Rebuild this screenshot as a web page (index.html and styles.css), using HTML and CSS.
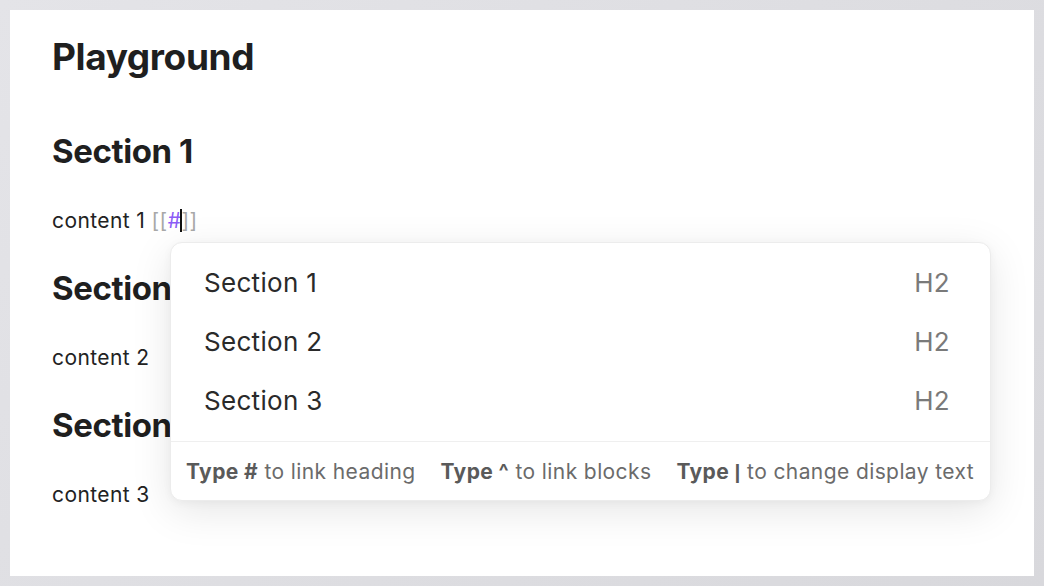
FILE: index.html
```html
<!DOCTYPE html>
<html>
<head>
<meta charset="utf-8">
<link rel="stylesheet" href="styles.css">
</head>
<body>
<div class="panel">
  <h1 class="title">Playground</h1>
  <section class="sec">
    <h2 class="heading">Section 1</h2>
    <p class="content">content 1 <span class="br">[[</span><span class="hash">#</span><span class="caret"></span><span class="br">]]</span></p>
  </section>
  <section class="sec">
    <h2 class="heading">Section 2</h2>
    <p class="content">content 2</p>
  </section>
  <section class="sec">
    <h2 class="heading">Section 3</h2>
    <p class="content">content 3</p>
  </section>

  <div class="popup">
    <ul class="items">
      <li class="item"><span class="name">Section 1</span><span class="level">H2</span></li>
      <li class="item"><span class="name">Section 2</span><span class="level">H2</span></li>
      <li class="item"><span class="name">Section 3</span><span class="level">H2</span></li>
    </ul>
    <div class="footer">
      <span class="hint"><b>Type #</b> to link heading</span>
      <span class="hint"><b>Type ^</b> to link blocks</span>
      <span class="hint"><b>Type <span class="pipe">|</span></b> to change display text</span>
    </div>
  </div>
</div>
</body>
</html>
```

FILE: styles.css
```css
html, body {
  margin: 0;
  padding: 0;
}
body {
  width: 1044px;
  height: 586px;
  background: linear-gradient(135deg, #e4e4e8 0%, #d8d8dc 100%);
  font-family: Inter, "Noto Sans", sans-serif;
  color: #222;
  overflow: hidden;
}
.panel {
  position: relative;
  margin: 10px;
  width: 1024px;
  height: 566px;
  background: #fff;
  box-sizing: border-box;
  padding: 24px 0 0 42px;
}
.title {
  margin: 0;
  font-size: 37px;
  line-height: 46px;
  font-weight: 700;
  letter-spacing: -0.4px;
  color: #1f1f1f;
}
.sec {
  margin-top: 50px;
}
.sec + .sec {
  margin-top: 32px;
}
.heading {
  margin: 0;
  font-size: 33px;
  line-height: 42px;
  font-weight: 700;
  letter-spacing: -0.4px;
  color: #1f1f1f;
}
.content {
  margin: 35px 0 0;
  font-size: 21px;
  line-height: 28px;
  letter-spacing: 0.4px;
  color: #222;
}
.br {
  color: #a8a8a8;
}
.hash {
  color: #8b5cf6;
}
.caret {
  display: inline-block;
  width: 2px;
  height: 23px;
  background: #111;
  vertical-align: -4px;
  margin: 0 -1px;
}
.popup {
  position: absolute;
  left: 160px;
  top: 232px;
  width: 821px;
  height: 259px;
  box-sizing: border-box;
  background: #fff;
  border: 1px solid #ececec;
  border-radius: 12px;
  box-shadow: 0 10px 40px rgba(0, 0, 0, 0.10), 0 2px 8px rgba(0, 0, 0, 0.04);
  display: flex;
  flex-direction: column;
}
.items {
  list-style: none;
  margin: 0;
  padding: 10px 0 11px;
  border-bottom: 1px solid #efefef;
}
.item {
  display: flex;
  justify-content: space-between;
  align-items: center;
  height: 59px;
  padding: 0 40px 0 33px;
  font-size: 26px;
  letter-spacing: 0.3px;
}
.name {
  color: #2a2a2a;
}
.level {
  color: #7a7a7a;
}
.footer {
  display: flex;
  align-items: center;
  gap: 25px;
  flex: 1;
  padding: 0 0 0 15px;
  font-size: 21px;
  letter-spacing: 0.4px;
  color: #6b6b6b;
}
.footer b {
  font-weight: 700;
  color: #5a5a5a;
}
.pipe {
  font-family: "Liberation Sans", Arial, sans-serif;
}
```
